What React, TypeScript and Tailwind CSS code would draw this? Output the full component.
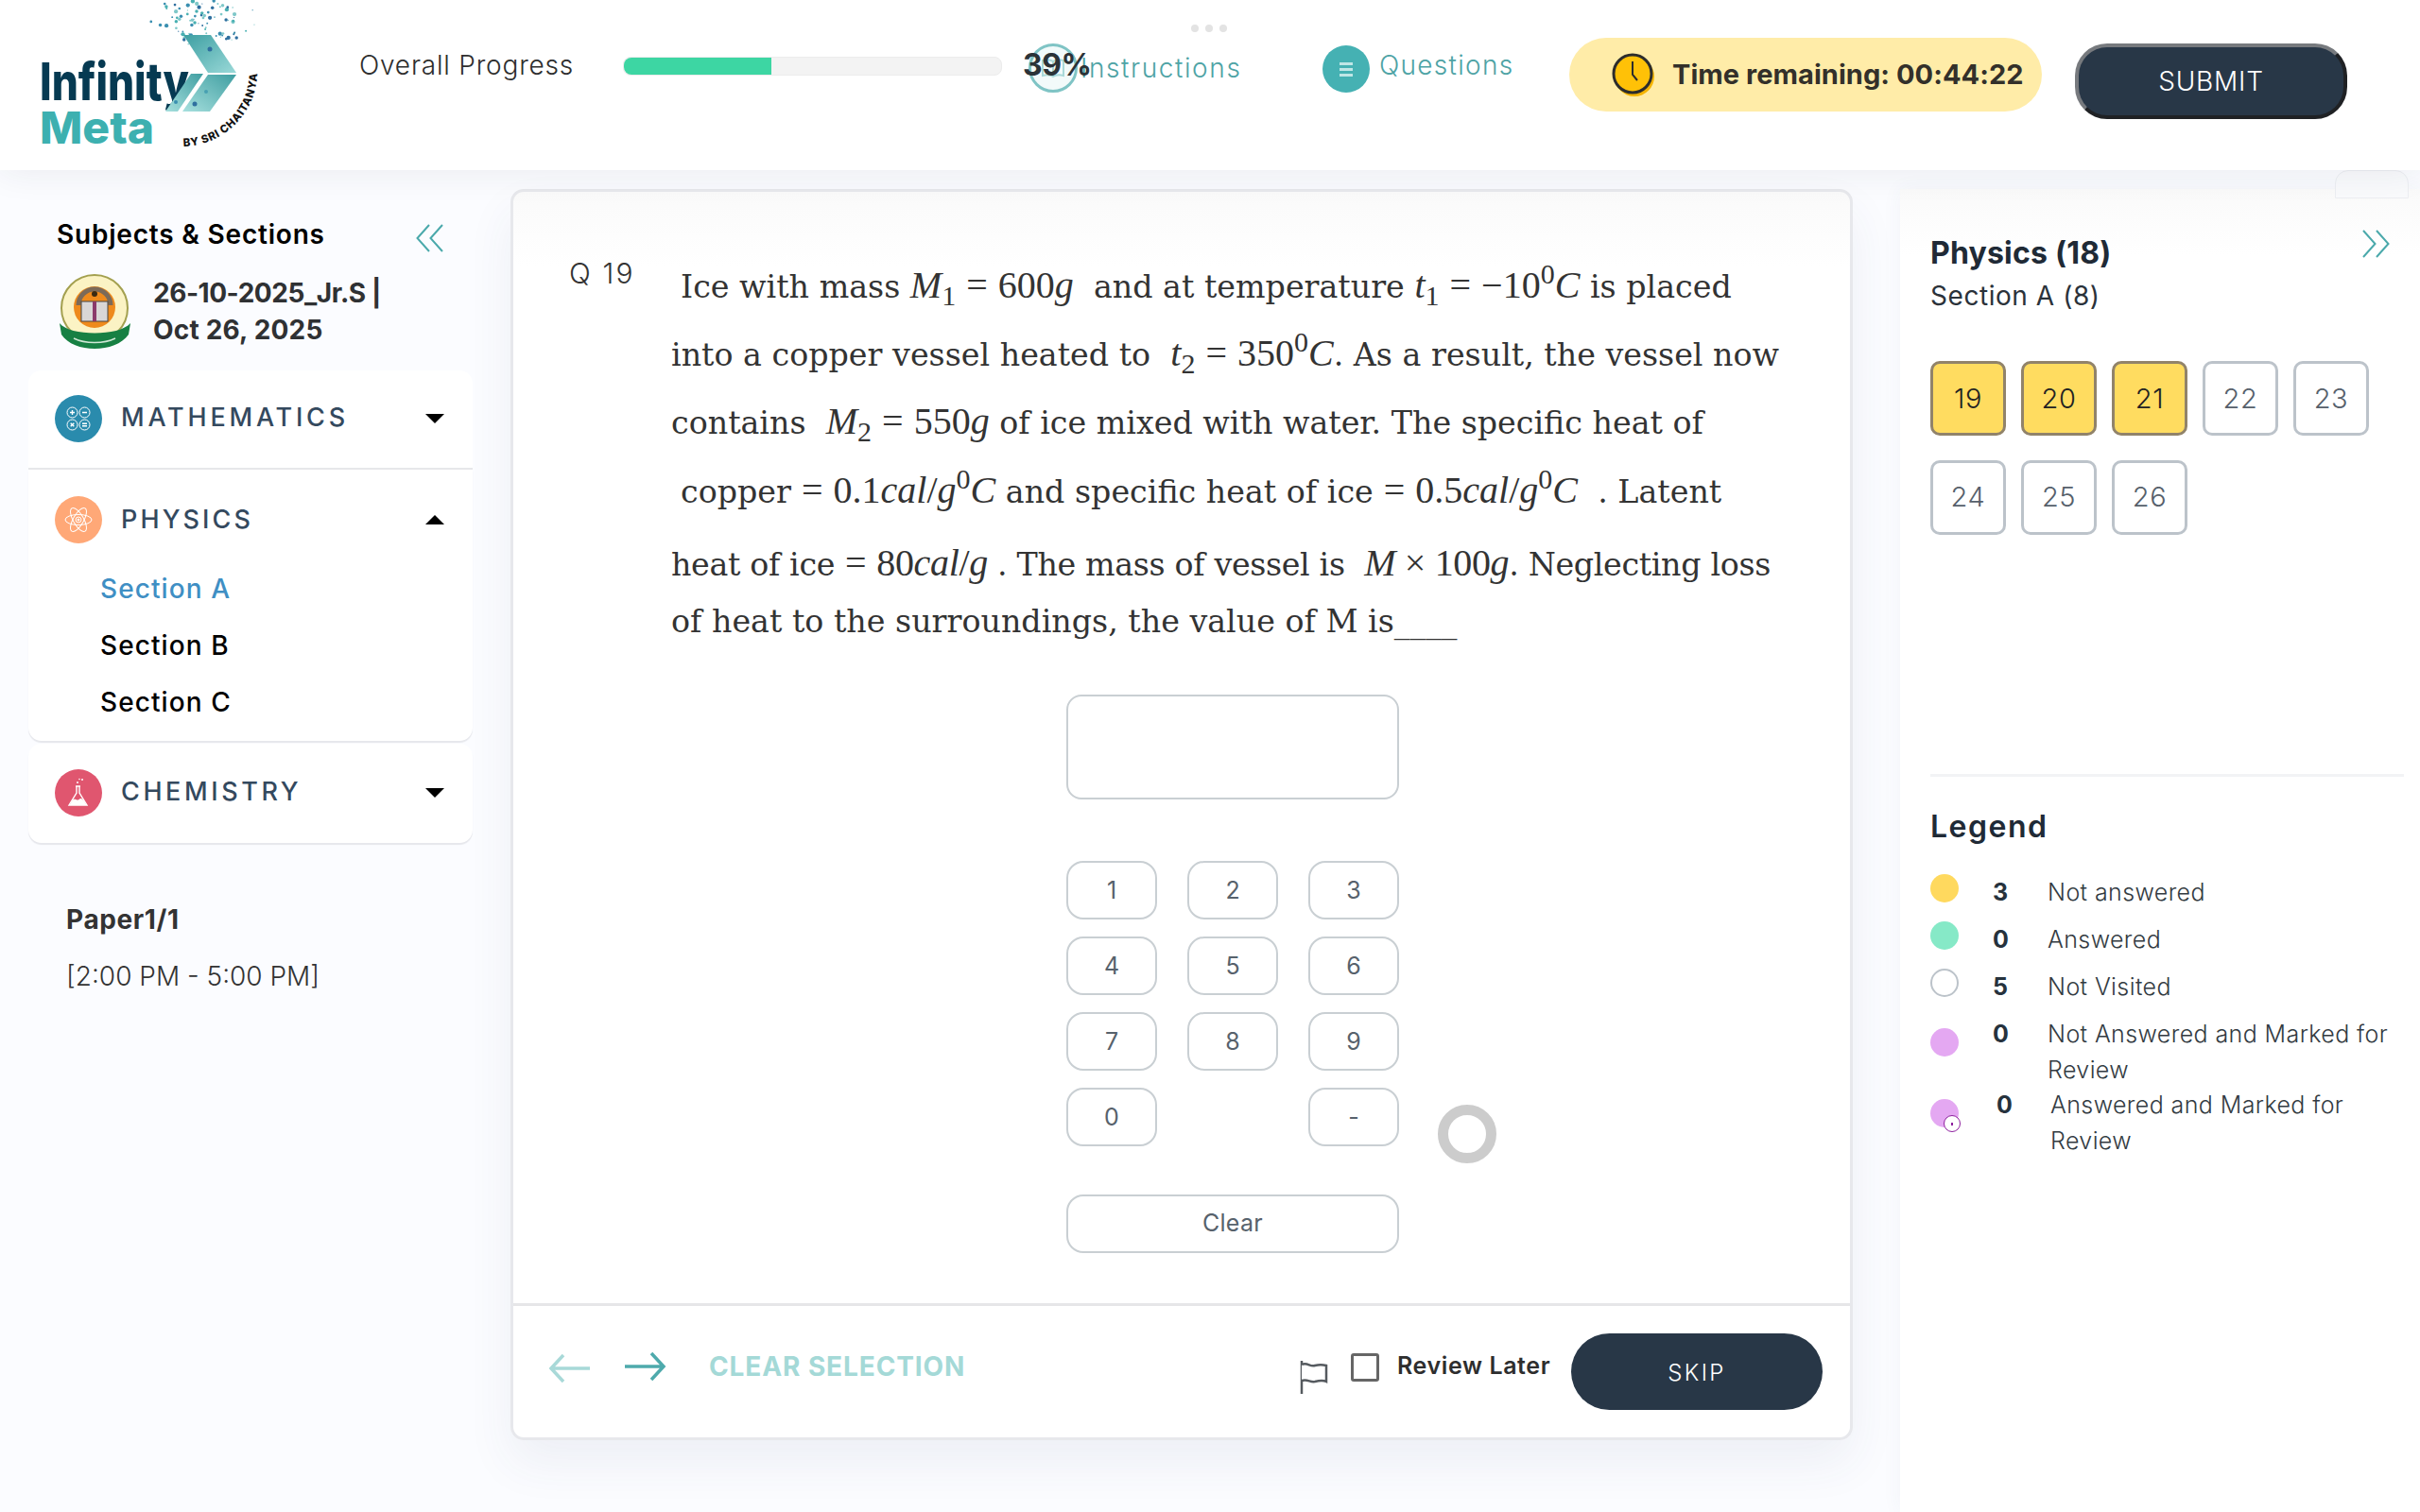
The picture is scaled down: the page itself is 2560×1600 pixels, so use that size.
import React from "react";

const Dbl = ({ dir }: { dir: "l" | "r" }) => (
  <svg width="30" height="30" viewBox="0 0 30 30" fill="none" stroke="#4aa9ab" strokeWidth="2">
    {dir === "l" ? (
      <>
        <path d="M14 1 1.5 15 14 29" />
        <path d="M28 1 15.5 15 28 29" />
      </>
    ) : (
      <>
        <path d="M2 1 14.5 15 2 29" />
        <path d="M16 1 28.5 15 16 29" />
      </>
    )}
  </svg>
);

const dots = Array.from({ length: 95 }, (_, i) => {
  const a = Math.sin(i * 12.9898) * 43758.5453;
  const b = Math.sin(i * 78.233) * 12543.123;
  const x = a - Math.floor(a);
  const y = b - Math.floor(b);
  const ang = -2.6 + x * 2.1;
  const r = 22 + y * 48;
  return {
    cx: 218 + Math.cos(ang) * r,
    cy: 58 + Math.sin(ang) * r,
    r: 0.6 + (i % 5) * 0.38,
    c: ["#48b0b2", "#2f6f9f", "#7fc8c9", "#3a8fb0"][i % 4],
  };
});

const Logo = () => (
  <svg width="290" height="170" viewBox="0 0 290 170" className="shrink-0">
    <defs>
      <linearGradient id="lg1" x1="0" y1="0" x2="1" y2="1">
        <stop offset="0" stopColor="#3d9fa2" />
        <stop offset="1" stopColor="#9ad9d8" />
      </linearGradient>
      <linearGradient id="lg2" x1="1" y1="0" x2="0" y2="1">
        <stop offset="0" stopColor="#3f9ea1" />
        <stop offset="1" stopColor="#a7e0de" />
      </linearGradient>
      <path id="arc" d="M194 155 A 80 80 0 0 0 272 68" />
    </defs>
    {dots.map((d, i) => (
      <circle key={i} cx={d.cx} cy={d.cy} r={d.r} fill={d.c} />
    ))}
    <text x="42" y="106" fontFamily="Inter, sans-serif" fontWeight="800" fontSize="55" fill="#063a52" textLength="158" lengthAdjust="spacingAndGlyphs">
      Infinity
    </text>
    <text x="42" y="152" fontFamily="Inter, sans-serif" fontWeight="800" fontSize="47" fill="#3db0b0" textLength="121" lengthAdjust="spacingAndGlyphs">
      Meta
    </text>
    <polygon points="194,37 223,37 250,77 220,77" fill="url(#lg1)" />
    <polygon points="220,79 250,79 222,118 193,118" fill="url(#lg2)" />
    <polygon points="202,78 215,78 188,118 175,118" fill="url(#lg2)" />
    <circle cx="222" cy="52" r="2.5" fill="#2f6f9f" />
    <circle cx="232" cy="68" r="1.5" fill="#7fc8c9" />
    <circle cx="206" cy="110" r="2.5" fill="#2f6f9f" />
    <circle cx="218" cy="97" r="2" fill="#48a0b2" />
    <circle cx="186" cy="108" r="2" fill="#3a8fb0" />
    <text fontFamily="Inter, sans-serif" fontWeight="800" fontSize="11.5" fill="#111" letterSpacing="0.7">
      <textPath href="#arc">BY SRI CHAITANYA</textPath>
    </text>
  </svg>
);

const Emblem = () => (
  <svg width="78" height="80" viewBox="0 0 78 80" className="shrink-0">
    <circle cx="38" cy="36" r="35" fill="#fbf3c4" stroke="#a3a04f" strokeWidth="2" />
    <circle cx="38" cy="35" r="22" fill="#ee8a1c" />
    <path d="M21 33 A17 17 0 0 1 55 33" fill="none" stroke="#7c6a58" strokeWidth="5" />
    <circle cx="38" cy="21" r="3" fill="#3a2a12" />
    <rect x="24" y="29" width="28" height="21" fill="#d9d6d6" stroke="#444" />
    <rect x="36" y="29" width="4" height="21" fill="#8b3a6b" />
    <path d="M1 52 C12 66 64 66 76 52 L74 64 C60 84 16 84 3 64 Z" fill="#178043" />
    <path d="M16 68 C28 74 48 74 60 68" stroke="#cfe7d4" strokeWidth="1.5" fill="none" />
  </svg>
);

const MathIcon = () => (
  <svg width="28" height="28" viewBox="0 0 28 28" fill="none" stroke="#fff" strokeWidth="1">
    <circle cx="7.5" cy="7.5" r="5.5" />
    <circle cx="20.5" cy="7.5" r="5.5" />
    <circle cx="7.5" cy="20.5" r="5.5" />
    <circle cx="20.5" cy="20.5" r="5.5" />
    <path d="M5 7.5h5M7.5 5v5M18 7.5h5M5.7 18.7l3.6 3.6M9.3 18.7l-3.6 3.6M18 19.3h5M18 21.7h5" strokeWidth="1.4" />
  </svg>
);

const AtomIcon = () => (
  <svg width="30" height="30" viewBox="0 0 30 30" fill="none" stroke="#fff" strokeWidth="1">
    <ellipse cx="15" cy="15" rx="14" ry="5.5" />
    <ellipse cx="15" cy="15" rx="14" ry="5.5" transform="rotate(60 15 15)" />
    <ellipse cx="15" cy="15" rx="14" ry="5.5" transform="rotate(120 15 15)" />
    <circle cx="15" cy="15" r="3" />
    <circle cx="15" cy="15" r="1" fill="#fff" />
  </svg>
);

const FlaskIcon = () => (
  <svg width="26" height="32" viewBox="0 0 26 32" fill="none" stroke="#fff" strokeWidth="1.4">
    <path d="M10 9h5M11 9v7L3 29h19l-8-13V9" />
    <path d="M6.5 24c3-3 5 1 7-1s3-1 5 1l3 5H3.5z" fill="#fff" stroke="none" />
    <circle cx="12" cy="5" r="1" fill="#fff" stroke="none" />
    <circle cx="17" cy="2" r="1" fill="#fff" stroke="none" />
    <circle cx="14" cy="1.5" r="0.8" fill="#fff" stroke="none" />
  </svg>
);

const Caret = ({ up }: { up?: boolean }) => (
  <svg width="20" height="10" viewBox="0 0 20 10" fill="#000">
    {up ? <path d="M10 0 20 10H0z" /> : <path d="M0 0h20L10 10z" />}
  </svg>
);

const SubjectRow = ({ bg, icon, name, up, track }: { bg: string; icon: React.ReactNode; name: string; up?: boolean; track: string }) => (
  <div className="flex items-center pl-[28px] pr-[30px] h-[50px]">
    <div className={`w-[50px] h-[50px] rounded-full flex items-center justify-center shrink-0 ${bg}`}>{icon}</div>
    <div className={`ml-[20px] flex-1 text-[27px] font-medium text-[#34495e] leading-none ${track}`}>{name}</div>
    <Caret up={up} />
  </div>
);

const Mt = ({ children }: { children: React.ReactNode }) => (
  <span className="font-['Liberation_Serif',serif] text-[40px] font-normal">{children}</span>
);
const I = ({ children }: { children: React.ReactNode }) => <i className="italic">{children}</i>;
const Eq = () => <span className="mx-[11px] not-italic">=</span>;

const Line = ({ h, pl, children }: { h: string; pl?: string; children: React.ReactNode }) => (
  <div className={`flex items-center whitespace-pre ${h} ${pl ?? ""}`}>
    <span>{children}</span>
  </div>
);

const Key = ({ children }: { children?: React.ReactNode }) => (
  <button className="w-[96px] h-[62px] rounded-[18px] border-2 border-[#c9cfd3] bg-white text-[25px] text-[#57626c] flex items-center justify-center pt-[1px]">
    {children}
  </button>
);

const Q = ({ n, on }: { n: number; on?: boolean }) => (
  <div
    className={`w-[80px] h-[79px] rounded-[10px] flex items-center justify-center text-[29px] font-light tracking-[0.6px] border-[3px] ${
      on ? "bg-[#ffdc60] border-[#91836a] text-[#222]" : "bg-white border-[#bcc3ca] text-[#56606b]"
    }`}
  >
    {n}
  </div>
);

const LegendRow = ({
  dot,
  count,
  label,
  extra,
  cx,
  dy,
  wrap,
}: {
  dot: string;
  count: number;
  label: React.ReactNode;
  extra?: boolean;
  cx: string;
  dy: string;
  wrap?: string;
}) => (
  <div className={`flex items-start text-[25px] leading-[38px] text-[#333b42] ${wrap ?? ""}`}>
    <div className={`relative w-[30px] h-[30px] rounded-full shrink-0 ${dot} ${dy}`}>
      {extra && (
        <div className="absolute left-[14px] top-[17px] w-[18px] h-[18px] rounded-full bg-white border border-[#8e1f9e] flex items-center justify-center">
          <div className="w-[2px] h-[3px] bg-[#8e1f9e]" />
        </div>
      )}
    </div>
    <div className={`font-bold text-[#26323d] text-[25px] shrink-0 ${cx}`}>{count}</div>
    <div className="font-light tracking-[0.4px]">{label}</div>
  </div>
);

export default function App() {
  return (
    <div className="w-[2560px] h-[1600px] overflow-hidden flex flex-col bg-[#fbfcff] relative font-['Inter',sans-serif]">
      <header className="relative h-[180px] shrink-0 bg-white flex items-start shadow-[0_0_36px_rgba(30,40,70,0.09)] z-10">
        <Logo />
        <div className="ml-[90px] mt-[51px] w-[279px] text-[28px] leading-[36px] font-light text-[#2e2e2e] tracking-[0.8px] whitespace-nowrap">
          Overall Progress
        </div>
        <div className="relative mt-[60px] w-[401px] h-[20px] rounded-[8px] bg-[#f3f3f3] border border-[#ececec]">
          <div className="h-full w-[39%] rounded-l-[8px] bg-[#3dd6a3]" />
          <div className="absolute left-[422px] top-[-12px] text-[32px] leading-[40px] font-bold text-[#2b3338] z-10 tracking-[-0.5px]">39%</div>
        </div>
        <div className="ml-[28px] mt-[46px] w-[227px] flex items-center">
          <div className="w-[52px] h-[52px] rounded-full border-[3px] border-[#7fc4c5] bg-[#f2fafa] flex items-center justify-center shrink-0">
            <svg width="26" height="24" viewBox="0 0 26 24" fill="none" stroke="#a9d9d9" strokeWidth="2">
              <path d="M13 5C10 3 6 3 2 4v16c4-1 8-1 11 1 3-2 7-2 11-1V4c-4-1-8-1-11 1zM13 5v16" />
            </svg>
          </div>
          <span className="ml-[3px] text-[28px] font-light text-[#4ea3a5] tracking-[1.6px] whitespace-nowrap">Instructions</span>
        </div>
        <div className="absolute left-[1260px] top-[26px] flex gap-[7px]">
          <div className="w-[8px] h-[8px] rounded-full bg-[#e3e3e3]" />
          <div className="w-[8px] h-[8px] rounded-full bg-[#e3e3e3]" />
          <div className="w-[8px] h-[8px] rounded-full bg-[#e3e3e3]" />
        </div>
        <div className="ml-[84px] mt-[48px] w-[202px] flex items-start">
          <div className="w-[50px] h-[50px] rounded-full bg-[#45b1b3] flex flex-col items-center justify-center gap-[3px] shrink-0">
            <div className="w-[14px] h-[3px] bg-[#bfe6e6]" />
            <div className="w-[14px] h-[3px] bg-[#bfe6e6]" />
            <div className="w-[14px] h-[3px] bg-[#bfe6e6]" />
          </div>
          <span className="ml-[10px] -mt-[1px] text-[28px] leading-[44px] font-light text-[#4ea3a5] tracking-[1.3px] whitespace-nowrap">Questions</span>
        </div>
        <div className="ml-[59px] mt-[40px] w-[500px] h-[78px] rounded-full bg-[#ffeca8] flex items-center pl-[44px]">
          <svg width="48" height="48" viewBox="0 0 48 48" className="shrink-0">
            <circle cx="25" cy="26" r="21" fill="#f5b400" />
            <circle cx="23" cy="23" r="20" fill="#ffc107" stroke="#2c2c2c" strokeWidth="3" />
            <path d="M23 10v14l5 6" fill="none" stroke="#2c2c2c" strokeWidth="2" />
          </svg>
          <span className="ml-[17px] text-[29px] font-bold text-[#33302a] tracking-[0.05px] whitespace-nowrap">Time remaining: 00:44:22</span>
        </div>
        <button className="ml-[35px] mt-[46px] w-[288px] h-[80px] rounded-[34px] bg-[#283747] border-[4px] border-t-[#777a7e] border-l-[#777a7e] border-b-[#1f2124] border-r-[#1f2124] text-white text-[28px] font-light tracking-[0.8px]">
          SUBMIT
        </button>
      </header>

      <div className="flex flex-1 min-h-0 relative">
        <div className="absolute left-[2470px] top-0 w-[78px] h-[30px] rounded-t-[14px] border border-[#eceef2] bg-[#f9fafc]" />
        <aside className="w-[540px] shrink-0 pl-[30px]">
          <div className="w-[470px]">
            <div className="flex items-center justify-between mt-[50px] h-[36px] pl-[30px] pr-[30px]">
              <span className="text-[28px] font-semibold text-black tracking-[0.8px]">Subjects &amp; Sections</span>
              <span className="mt-[4px] -mb-[4px]"><Dbl dir="l" /></span>
            </div>
            <div className="flex items-center mt-[24px] h-[80px] pl-[32px]">
              <Emblem />
              <div className="ml-[22px] text-[28px] leading-[39px] font-bold text-[#2f3133]">
                <div className="tracking-[-0.45px]">26-10-2025_Jr.S |</div>
                <div className="tracking-[0.2px]">Oct 26, 2025</div>
              </div>
            </div>
            <div className="mt-[22px] bg-white rounded-t-[14px] h-[105px] pt-[26px] border-b-[2px] border-[#e6e7ea]">
              <SubjectRow bg="bg-[#2a8bad]" icon={<MathIcon />} name="MATHEMATICS" track="tracking-[3.8px] -mt-[3px]" />
            </div>
            <div className="bg-white rounded-b-[14px] h-[287px] pt-[28px] shadow-[0_2px_1px_#e6e7ec]">
              <SubjectRow bg="bg-[#ffa877]" icon={<AtomIcon />} name="PHYSICS" up track="tracking-[3.1px] -mt-[1px]" />
              <div className="mt-[18px] pl-[76px] text-[28px] leading-[60px] font-medium text-black tracking-[1.1px]">
                <div className="text-[#3f8fc4]">Section A</div>
                <div>Section B</div>
                <div>Section C</div>
              </div>
            </div>
            <div className="mt-[3px] bg-white rounded-[14px] h-[105px] pt-[27px] shadow-[0_2px_1px_#e6e7ec]">
              <SubjectRow bg="bg-[#e0566f]" icon={<FlaskIcon />} name="CHEMISTRY" track="tracking-[3.6px] -mt-[3px]" />
            </div>
            <div className="mt-[63px] pl-[40px] text-[28px] text-[#333] leading-[36px]">
              <div className="font-bold tracking-[0.6px]">Paper1/1</div>
              <div className="mt-[24px] font-light">[2:00 PM - 5:00 PM]</div>
            </div>
          </div>
        </aside>

        <main className="w-[1420px] shrink-0 mt-[20px] h-[1324px] rounded-[14px] border-[3px] border-[#e7e8ec] bg-gradient-to-b from-[#fafafa] to-white to-[6%] flex flex-col shadow-[0_24px_50px_rgba(60,70,110,0.07)]">
          <div className="relative flex-1 flex items-start min-h-0">
            <div className="w-[167px] shrink-0 pl-[59px] pt-[66px] text-[30px] leading-[40px] font-light text-[#333] tracking-[2.2px]">Q 19</div>
            <div className="pt-[63px] text-[33.3px] text-[#333] font-['DejaVu_Serif',serif]">
              <Line h="h-[72px]" pl="pl-[10px]">
                Ice with mass <Mt><I>M</I><sub>1</sub><Eq />600<I>g</I></Mt>  and at temperature <Mt><I>t</I><sub>1</sub><Eq />−10<sup>0</sup><I>C</I></Mt> is placed
              </Line>
              <Line h="h-[72px]">
                into a copper vessel heated to  <Mt><I>t</I><sub>2</sub><Eq />350<sup>0</sup><I>C</I></Mt>. As a result, the vessel now
              </Line>
              <Line h="h-[72px]">
                contains  <Mt><I>M</I><sub>2</sub><Eq />550<I>g</I></Mt> of ice mixed with water. The specific heat of
              </Line>
              <Line h="h-[74px]" pl="pl-[10px]">
                copper<Mt><Eq />0.1<I>cal</I>/<I>g</I><sup>0</sup><I>C</I></Mt> and specific heat of ice<Mt><Eq />0.5<I>cal</I>/<I>g</I><sup>0</sup><I>C</I></Mt>  . Latent
              </Line>
              <Line h="h-[80px] tracking-[-0.35px]">
                heat of ice<Mt><Eq />80<I>cal</I>/<I>g</I></Mt> . The mass of vessel is  <Mt><I>M</I> × 100<I>g</I></Mt>. Neglecting loss
              </Line>
              <Line h="h-[44px]">of heat to the surroundings, the value of M is____</Line>
              <div className="ml-[418px] w-[352px] font-['Inter',sans-serif]">
                <div className="mt-[55px] h-[111px] rounded-[16px] border-2 border-[#c9cfd3] bg-white" />
                <div className="mt-[65px] grid grid-cols-[96px_96px_96px] gap-x-[32px] gap-y-[18px]">
                  {["1", "2", "3", "4", "5", "6", "7", "8", "9", "0"].map((k) => (
                    <Key key={k}>{k}</Key>
                  ))}
                  <div />
                  <Key>-</Key>
                </div>
                <button className="mt-[51px] w-[352px] h-[62px] rounded-[18px] border-2 border-[#c9cfd3] bg-white text-[25px] text-[#57626c] tracking-[0.3px]">Clear</button>
              </div>
            </div>
            <div className="absolute left-[978px] top-[966px] w-[62px] h-[62px] rounded-full border-[11px] border-[#cccccc]" />
          </div>
          <div className="h-[142px] shrink-0 border-t-[3px] border-[#e6e6e8] flex items-start pl-[38px]">
            <svg width="44" height="32" viewBox="0 0 44 32" fill="none" stroke="#a8d9d8" className="mt-[50px] shrink-0">
              <path d="M3 16h40M15 2 2 16l13 14" strokeWidth="3.5" />
            </svg>
            <svg width="44" height="32" viewBox="0 0 44 32" fill="none" stroke="#4eaaac" className="ml-[36px] mt-[48px] shrink-0">
              <path d="M0 16h40M28 2l13 14-13 14" strokeWidth="3.5" />
            </svg>
            <div className="ml-[45px] mt-[46px] w-[625px] text-[28px] leading-[36px] font-bold text-[#a4d9d7] tracking-[0.9px]">CLEAR SELECTION</div>
            <svg width="32" height="36" viewBox="0 0 32 36" fill="none" stroke="#555a5f" strokeWidth="2.5" className="mt-[57px] shrink-0">
              <path d="M2 1v35" strokeWidth="2.5" />
              <path d="M2 5c6-3 9 3 14 1 4-1 8-1 12 0v17c-4-2-8-1-12 0-5 1-8-3-14-1" fill="#fff" />
            </svg>
            <div className="ml-[22px] mt-[50px] w-[30px] h-[30px] rounded-[3px] border-[3px] border-[#666] shrink-0" />
            <div className="ml-[19px] mt-[47px] w-[184px] text-[25px] leading-[32px] font-semibold text-[#2e2e2e] tracking-[0.6px] whitespace-nowrap">Review Later</div>
            <button className="mt-[29px] w-[266px] h-[81px] rounded-full bg-[#283747] text-white text-[24px] font-light tracking-[2.4px] shrink-0 pt-[2px]">SKIP</button>
          </div>
        </main>

        <aside className="ml-[50px] mt-[20px] flex-1 bg-white shadow-[0_0_20px_rgba(60,70,110,0.05)] bg-gradient-to-b from-[#fafafa] to-white to-[5%] pl-[32px] pr-[17px]">
          <div className="flex items-start justify-between pt-[47px] pr-[15px]">
            <div className="text-[32px] leading-[42px] font-bold text-[#202a36] tracking-[0.2px]">Physics (18)</div>
            <span className="-mt-[4px]"><Dbl dir="r" /></span>
          </div>
          <div className="mt-[6px] text-[28px] leading-[36px] text-[#2b323a] font-normal tracking-[0.55px]">Section A (8)</div>
          <div className="mt-[51px] grid grid-cols-[80px_80px_80px_80px_80px] gap-x-[16px] gap-y-[25px] h-[184px]">
            {[19, 20, 21].map((n) => (
              <Q key={n} n={n} on />
            ))}
            {[22, 23, 24, 25, 26].map((n) => (
              <Q key={n} n={n} />
            ))}
          </div>
          <div className="mt-[253px] h-[3px] bg-[#f2f3f5]" />
          <div className="mt-[32px] text-[32px] leading-[42px] font-semibold text-[#202a36] tracking-[1.5px]">Legend</div>
          <div className="mt-[29px] flex flex-col gap-[12px]">
            <LegendRow dot="bg-[#ffd95e]" count={3} label="Not answered" cx="ml-[36px] w-[58px]" dy="" />
            <LegendRow dot="bg-[#86e9c7]" count={0} label="Answered" cx="ml-[36px] w-[58px]" dy="" />
            <LegendRow dot="bg-white border-2 border-[#bcc3ca]" count={5} label="Not Visited" cx="ml-[36px] w-[58px]" dy="" />
            <LegendRow dot="bg-[#e4a8f2]" count={0} label="Not Answered and Marked for Review" cx="ml-[36px] w-[58px]" dy="mt-[13px]" />
            <LegendRow dot="bg-[#e4a8f2]" count={0} label={<>Answered and Marked for<br />Review</>} extra cx="ml-[40px] w-[57px]" dy="mt-[13px]" wrap="-mt-[13px]" />
          </div>
        </aside>
      </div>
    </div>
  );
}
